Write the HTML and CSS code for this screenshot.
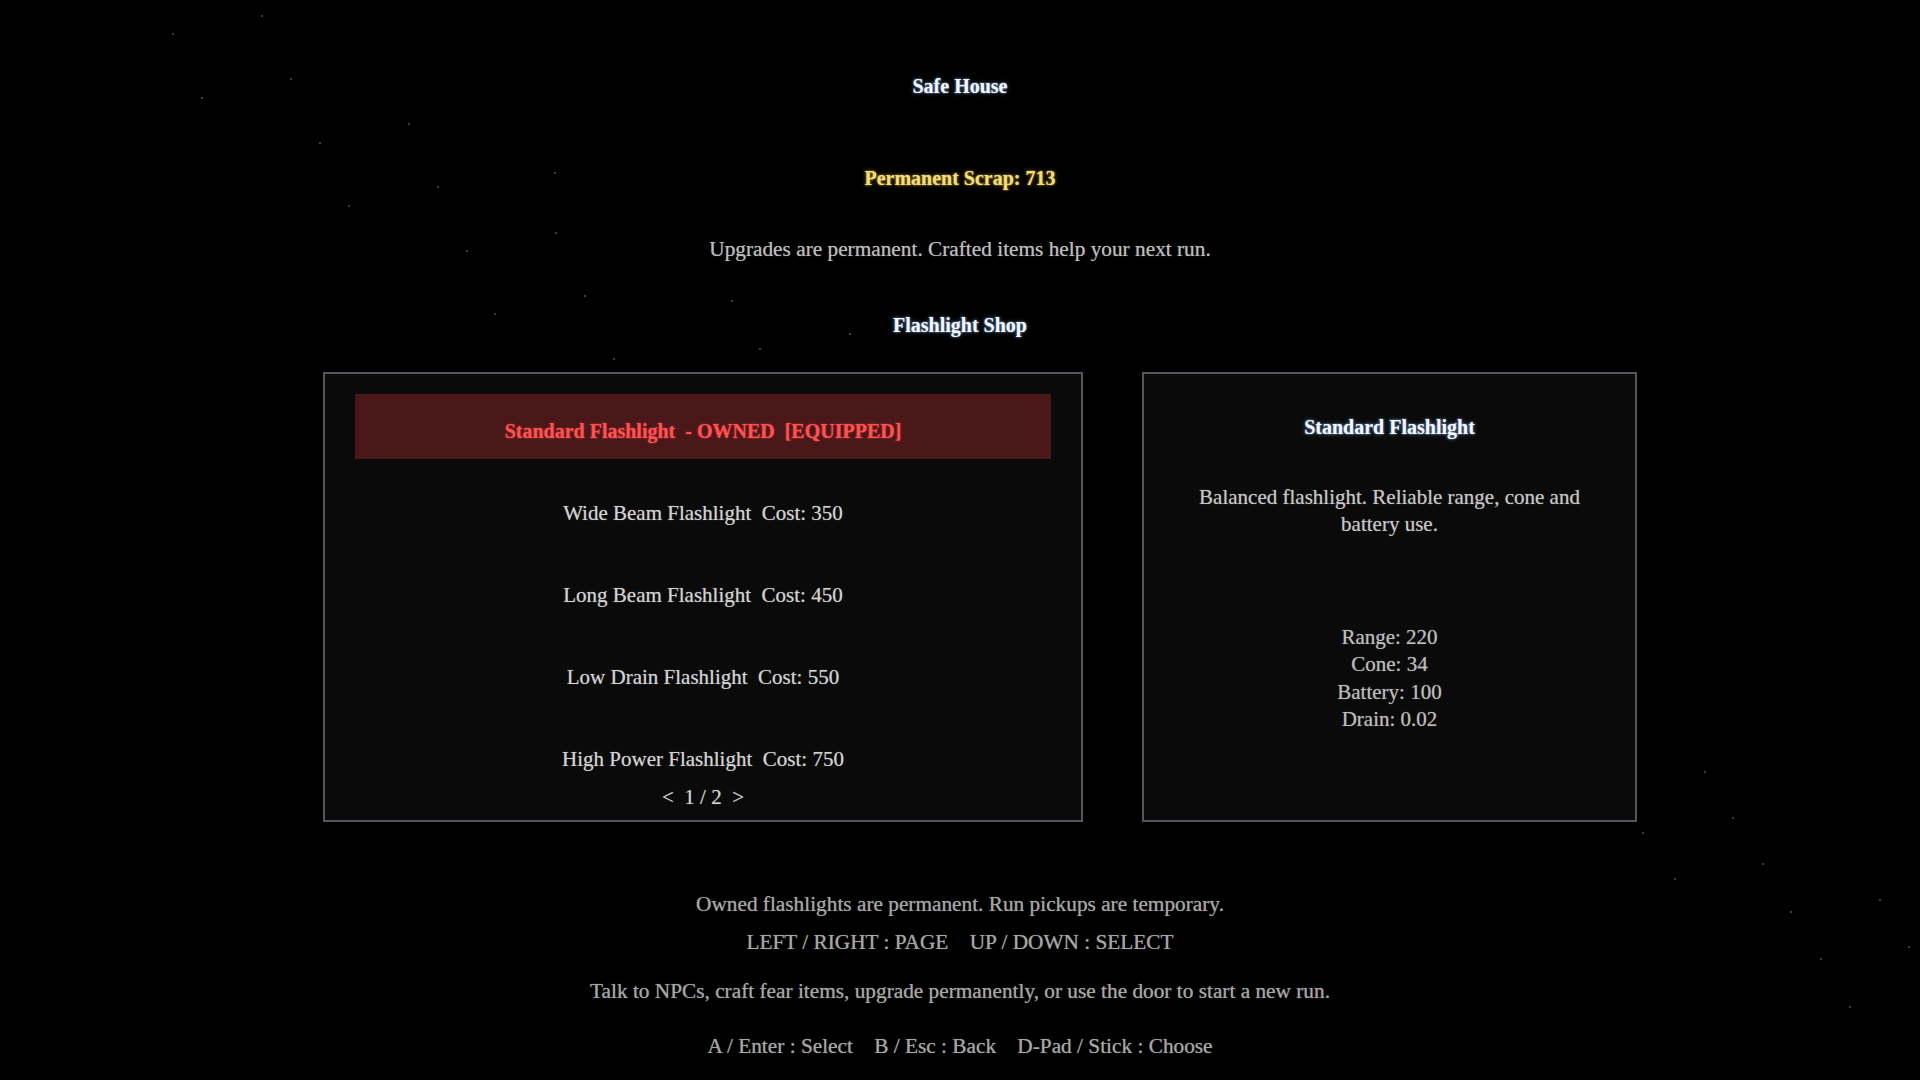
FILE: index.html
```html
<!DOCTYPE html>
<html lang="en">
<head>
<meta charset="utf-8">
<title>Safe House</title>
<link rel="stylesheet" href="styles.css">
</head>
<body>
<div class="screen">
  <svg class="starfield" width="1920" height="1080" viewBox="0 0 1920 1080" aria-hidden="true">
    <g fill="#3c3c40">
      <rect x="261" y="15" width="2" height="2"/><rect x="172" y="33" width="2" height="2"/>
      <rect x="290" y="78" width="2" height="2"/><rect x="201" y="97" width="2" height="2"/>
      <rect x="408" y="123" width="2" height="2"/><rect x="319" y="142" width="2" height="2"/>
      <rect x="437" y="186" width="2" height="2"/><rect x="348" y="205" width="2" height="2"/>
      <rect x="555" y="232" width="2" height="2"/><rect x="466" y="250" width="2" height="2"/>
      <rect x="584" y="295" width="2" height="2"/><rect x="494" y="313" width="2" height="2"/>
      <rect x="613" y="358" width="2" height="2"/><rect x="642" y="421" width="2" height="2"/>
      <rect x="554" y="172" width="2" height="2"/><rect x="731" y="300" width="2" height="2"/>
      <rect x="759" y="348" width="2" height="2"/><rect x="849" y="333" width="2" height="2"/>
      <rect x="1642" y="832" width="2" height="2"/><rect x="1674" y="878" width="2" height="2"/>
      <rect x="1732" y="817" width="2" height="2"/><rect x="1762" y="863" width="2" height="2"/>
      <rect x="1790" y="911" width="2" height="2"/><rect x="1820" y="958" width="2" height="2"/>
      <rect x="1879" y="899" width="2" height="2"/><rect x="1908" y="946" width="2" height="2"/>
      <rect x="1849" y="1006" width="2" height="2"/><rect x="1614" y="786" width="2" height="2"/>
      <rect x="1704" y="771" width="2" height="2"/><rect x="1585" y="739" width="2" height="2"/>
    </g>
    <g fill="#1c1c1f">
      <rect x="1399" y="473" width="2" height="2"/><rect x="1172" y="611" width="2" height="2"/>
      <rect x="1441" y="653" width="2" height="2"/><rect x="1493" y="796" width="2" height="2"/>
      <rect x="1050" y="563" width="2" height="2"/><rect x="1028" y="391" width="2" height="2"/>
      <rect x="1602" y="737" width="2" height="2"/>
    </g>
  </svg>

  <h1 class="heading">Safe House</h1>
  <p class="scrap">Permanent Scrap: 713</p>
  <p class="note">Upgrades are permanent. Crafted items help your next run.</p>
  <h2 class="heading shop-title">Flashlight Shop</h2>

  <div class="shop">
    <section class="panel list-panel">
      <div class="item selected">Standard Flashlight  - OWNED  [EQUIPPED]</div>
      <div class="item">Wide Beam Flashlight  Cost: 350</div>
      <div class="item">Long Beam Flashlight  Cost: 450</div>
      <div class="item">Low Drain Flashlight  Cost: 550</div>
      <div class="item">High Power Flashlight  Cost: 750</div>
      <div class="pager">&lt;  1 / 2  &gt;</div>
    </section>

    <section class="panel detail-panel">
      <h3 class="heading detail-title">Standard Flashlight</h3>
      <p class="detail-desc">Balanced flashlight. Reliable range, cone and battery use.</p>
      <ul class="stats">
        <li>Range: 220</li>
        <li>Cone: 34</li>
        <li>Battery: 100</li>
        <li>Drain: 0.02</li>
      </ul>
    </section>
  </div>

  <p class="hint hint-owned">Owned flashlights are permanent. Run pickups are temporary.</p>
  <p class="hint hint-keys">LEFT / RIGHT : PAGE    UP / DOWN : SELECT</p>
  <p class="hint hint-talk">Talk to NPCs, craft fear items, upgrade permanently, or use the door to start a new run.</p>
  <p class="hint hint-controls">A / Enter : Select    B / Esc : Back    D-Pad / Stick : Choose</p>
</div>
</body>
</html>
```

FILE: styles.css
```css
* { box-sizing: border-box; }

html, body {
  margin: 0;
  padding: 0;
  background: #000;
}

body {
  width: 1920px;
  height: 1080px;
  overflow: hidden;
  font-family: "Liberation Serif", "Times New Roman", serif;
  font-size: 20px;
  line-height: 24px;
  color: #c4c4c4;
}

.screen {
  position: relative;
  width: 1920px;
  height: 1080px;
  display: flex;
  flex-direction: column;
  align-items: center;
  padding-top: 74px;
}

.starfield {
  position: absolute;
  left: 0;
  top: 0;
  z-index: 0;
  pointer-events: none;
}

.screen > *:not(.starfield) {
  position: relative;
  z-index: 1;
}

p, h1, h2, h3, ul { margin: 0; padding: 0; }

.heading {
  font-size: 20px;
  font-weight: bold;
  line-height: 24px;
  color: #f4f7ff;
  text-shadow: 0 0 2px rgba(150, 190, 235, 0.9), 0 0 5px rgba(110, 150, 210, 0.55);
}

.scrap {
  margin-top: 68px;
  font-weight: bold;
  color: #f3dd78;
  text-shadow: 0 0 2px rgba(240, 210, 90, 0.8), 0 0 5px rgba(200, 160, 40, 0.45);
}

.note {
  margin-top: 47px;
  font-size: 21.3px;
  color: #bdbdbd;
  text-shadow: 0 0 1px rgba(200, 200, 200, 0.6);
}

.shop-title {
  margin-top: 52px;
}

.shop {
  margin-top: 35px;
  margin-left: 40px;
  display: flex;
  gap: 59px;
}

.panel {
  height: 450px;
  border: 2px solid #55555d;
  background: #0a0a0a;
  display: flex;
  flex-direction: column;
  align-items: center;
}

.list-panel {
  width: 760px;
  padding: 20px 30px 0 30px;
}

.item {
  white-space: pre;
  font-size: 21px;
  color: #d2d2d2;
  margin-top: 58px;
  text-shadow: 0 0 1px rgba(210, 210, 210, 0.6);
}

.item.selected {
  align-self: stretch;
  height: 65px;
  margin-top: 0;
  margin-bottom: -16px;
  padding-top: 25px;
  font-size: 20px;
  text-align: center;
  background: #4a1819;
  color: #ff5252;
  font-weight: bold;
  text-shadow: 0 0 2px rgba(255, 70, 70, 0.7);
}

.pager {
  white-space: pre;
  margin-top: 14px;
  font-size: 21px;
  color: #d2d2d2;
  text-shadow: 0 0 1px rgba(210, 210, 210, 0.6);
}

.detail-panel {
  width: 495px;
  padding: 41px 40px 0 40px;
  text-align: center;
}

.detail-desc {
  margin-top: 45px;
  max-width: 400px;
  font-size: 21px;
  line-height: 27px;
  color: #c6c6c6;
  text-shadow: 0 0 1px rgba(200, 200, 200, 0.6);
}

.stats {
  list-style: none;
  margin-top: 86px;
  font-size: 21px;
  line-height: 27.4px;
  color: #bcbcbc;
  text-shadow: 0 0 1px rgba(200, 200, 200, 0.6);
}

.hint {
  white-space: pre;
  font-size: 21.3px;
  color: #a6a6a6;
  text-shadow: 0 0 1px rgba(170, 170, 170, 0.7);
}

.hint-owned { margin-top: 70px; }
.hint-keys { margin-top: 14px; }
.hint-talk { margin-top: 25px; }
.hint-controls { margin-top: 31px; }
```
